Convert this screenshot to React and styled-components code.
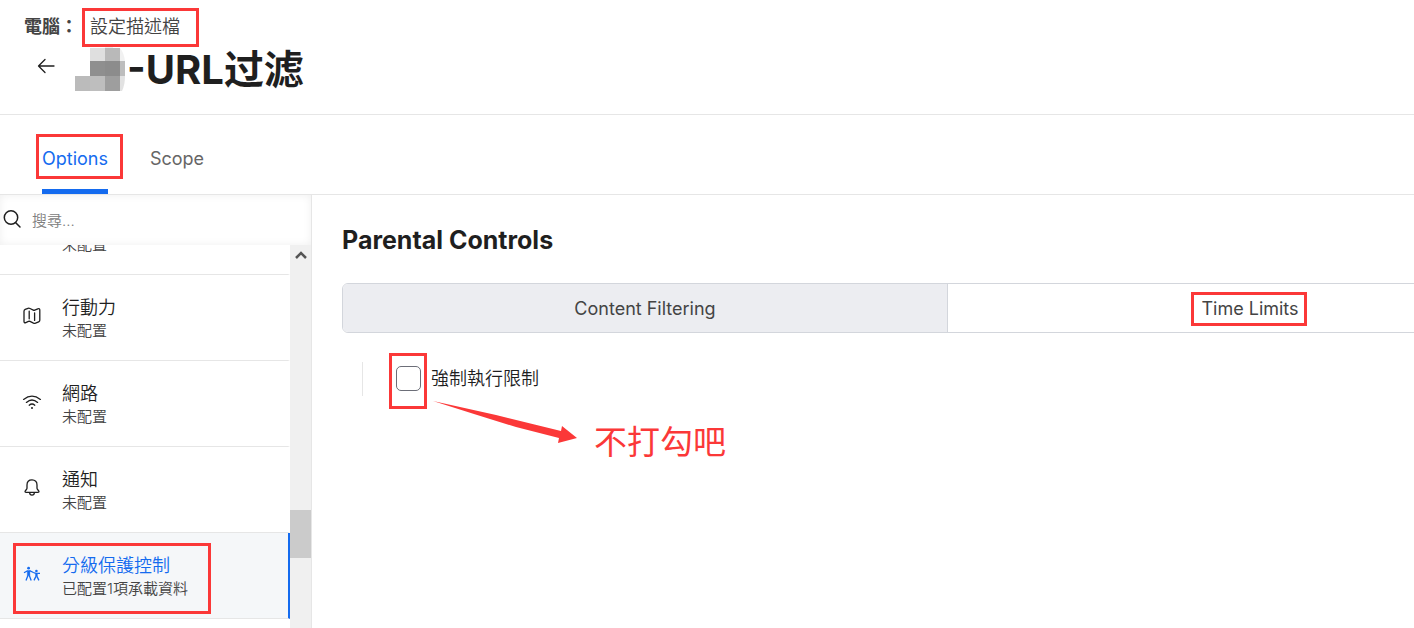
import React from "react";
import styled, { createGlobalStyle, ThemeProvider } from "styled-components";

const theme = {
  Text: "#1f1f1f",
  SubText: "#444444",
  Muted: "#666666",
  Blue: "#146bef",
  Line: "#e6e6e6",
  SegmentLine: "#d3d6dc",
  Mark: "#fb3838",
};

const GlobalStyle = createGlobalStyle`
  * {
    box-sizing: border-box;
  }
  body {
    margin: 0;
    background: #ffffff;
    color: ${(props) => props.theme.Text};
    font-family: Inter, "Noto Sans CJK TC", sans-serif;
    font-size: 18px;
    overflow: hidden;
  }
  h1, h2, p {
    margin: 0;
  }
  button, input {
    font: inherit;
    color: inherit;
  }
`;

const Page = styled.div`
  display: flex;
  flex-direction: column;
  height: 100vh;
`;

/* red frame drawn round its parent; $box is top right bottom left */
const Mark = styled.span`
  position: absolute;
  inset: ${(props) => props.$box};
  border: 3px solid ${(props) => props.theme.Mark};
  pointer-events: none;
  z-index: 2;
`;

const Header = styled.header`
  padding: 14px 24px 16px;
  border-bottom: 1px solid ${(props) => props.theme.Line};
`;
const Crumbs = styled.nav`
  display: flex;
  align-items: center;
  gap: 12px;
  line-height: 26px;
  color: ${(props) => props.theme.SubText};
`;
const CrumbLabel = styled.span`
  width: 54px;
  white-space: nowrap;
  font-weight: 700;
`;
const CrumbLink = styled.a`
  position: relative;
  color: inherit;
  font-weight: 350;
  text-decoration: none;
`;
const TitleRow = styled.div`
  display: flex;
  align-items: center;
  height: 58px;
  padding-top: 2px;
`;
const BackButton = styled.button`
  display: flex;
  padding: 0;
  margin: 0 19px 8px 12px;
  border: 0;
  background: none;
`;
const Title = styled.h1`
  font-family: Inter, "Noto Sans CJK SC", sans-serif;
  font-size: 40px;
  line-height: 56px;
  font-weight: 700;
`;

const Tabs = styled.nav`
  display: flex;
  gap: 42px;
  height: 80px;
  flex: none;
  padding: 0 42px;
  border-bottom: 1px solid ${(props) => props.theme.Line};
`;
const Tab = styled.a`
  position: relative;
  display: flex;
  align-items: center;
  padding-top: 13px;
  border-bottom: 5px solid
    ${(props) => (props.$active ? props.theme.Blue : "transparent")};
  color: ${(props) => (props.$active ? props.theme.Blue : props.theme.Muted)};
  text-decoration: none;
`;

const Content = styled.div`
  display: flex;
  flex: 1;
  min-height: 0;
`;
const Sidebar = styled.aside`
  display: flex;
  flex-direction: column;
  width: 312px;
  flex: none;
  border-right: 1px solid ${(props) => props.theme.Line};
`;
const Search = styled.label`
  display: flex;
  align-items: center;
  gap: 10px;
  height: 50px;
  flex: none;
  padding-left: 2px;
  box-shadow: inset 0 0 8px #efefef;
`;
const SearchInput = styled.input`
  flex: 1;
  min-width: 0;
  padding: 0;
  border: 0;
  outline: 0;
  background: none;
  font-size: 15px;
  font-weight: 350;
  &::placeholder {
    color: #808080;
  }
`;
const ListArea = styled.div`
  display: flex;
  flex: 1;
  min-height: 0;
`;
const ListClip = styled.div`
  flex: 1;
  overflow: hidden;
`;
const List = styled.div`
  margin-top: -56px;
`;
const Item = styled.a`
  position: relative;
  display: flex;
  align-items: center;
  gap: 20px;
  height: 86px;
  padding: 2px 22px 0;
  border-bottom: 1px solid ${(props) => props.theme.Line};
  border-right: 2px solid
    ${(props) => (props.$active ? props.theme.Blue : "transparent")};
  background: ${(props) => (props.$active ? "#f5f7f9" : "#ffffff")};
  color: ${(props) => (props.$active ? props.theme.Blue : props.theme.Text)};
  text-decoration: none;
`;
const ItemIcon = styled.svg`
  width: 20px;
  height: 20px;
  flex: none;
  margin-bottom: 6px;
`;
const ItemName = styled.p`
  min-height: 24px;
  line-height: 24px;
  font-weight: 350;
`;
const ItemState = styled.p`
  line-height: 22px;
  font-size: 15px;
  font-weight: 350;
  color: ${(props) => props.theme.SubText};
`;

const Scrollbar = styled.div`
  display: flex;
  flex-direction: column;
  width: 21px;
  background: #f0f0f0;
`;
const ScrollUp = styled.button`
  display: flex;
  align-items: center;
  justify-content: center;
  height: 20px;
  padding: 0;
  border: 0;
  background: none;
`;
const Track = styled.div`
  flex: ${(props) => props.$part};
`;
const Thumb = styled.div`
  height: 48px;
  background: #cbcbcb;
`;

const Main = styled.main`
  flex: 1;
  min-width: 0;
  overflow: hidden;
  padding: 28px 0 0 30px;
`;
const Heading = styled.h2`
  font-size: 25px;
  line-height: 34px;
  font-weight: 700;
`;
const Segments = styled.div`
  display: flex;
  width: calc(100% + 140px);
  height: 50px;
  margin-top: 26px;
  border: 1px solid ${(props) => props.theme.SegmentLine};
  border-radius: 6px;
  overflow: hidden;
`;
const Segment = styled.button`
  flex: 1;
  padding: 0;
  border: 0;
  border-right: 1px solid ${(props) => props.theme.SegmentLine};
  background: ${(props) => (props.$active ? "#ecedf1" : "#ffffff")};
  color: ${(props) => props.theme.SubText};
`;
const SegmentText = styled.span`
  position: relative;
`;
const Setting = styled.div`
  position: relative;
  display: flex;
  align-items: center;
  gap: 10px;
  height: 34px;
  margin: 29px 0 0 20px;
  padding-left: 33px;
  border-left: 1px solid ${(props) => props.theme.Line};
`;
const CheckWrap = styled.span`
  position: relative;
  display: flex;
  margin-bottom: 2px;
`;
const Checkbox = styled.input`
  appearance: none;
  width: 25px;
  height: 25px;
  margin: 0;
  border: 1px solid #6c6e78;
  border-radius: 5px;
  background: #ffffff;
`;
const SettingLabel = styled.label`
  margin-bottom: 4px;
  font-weight: 350;
`;
const Arrow = styled.svg`
  position: absolute;
  left: 69px;
  top: 37px;
`;
const Note = styled.p`
  position: absolute;
  left: 231px;
  top: 54px;
  font-family: "Noto Sans CJK SC", sans-serif;
  font-size: 33px;
  line-height: 48px;
  color: ${(props) => props.theme.Mark};
`;

const stroke = {
  fill: "none",
  stroke: "currentColor",
  strokeWidth: 1.3,
  strokeLinecap: "round",
  strokeLinejoin: "round",
};

const icons = {
  map: (
    <g {...stroke}>
      <path d="M2 5.2Q2 4 3.2 3.4L6 2.3Q7 2 8 2.5l3.3 1.6q.7.3 1.5 0l3-1.3q2-.6 2 1.2v10.2q0 1.1-1.1 1.6l-3.2 1.4q-1 .4-2 0L8 15.4q-.8-.3-1.6 0L3.8 16.6Q2 17.2 2 15.6Z" />
      <path d="M7.2 5.2v7.6M12.6 6.8v7.6" />
    </g>
  ),
  wifi: (
    <g {...stroke}>
      <path d="M1.6 7.400Q10 .8 18.400 7.400M4.400 10.400q5.600-4.800 11.200 0M7.200 13.200q2.800-2.400 5.600 0" />
      <circle cx="10" cy="15.900" r="1" fill="currentColor" stroke="none" />
    </g>
  ),
  bell: (
    <g {...stroke}>
      <path d="M10 1.8C6.8 1.8 5 4 5 7v3.2c0 1.200-2 2.400-2 3.600 0 .5.5.5 1 .5h12c.5 0 1 0 1-.5 0-1.200-2-2.400-2-3.600V7c0-3-1.800-5.200-5-5.200ZM7.600 14.500c.200 3.600 4.600 3.600 4.800 0" />
    </g>
  ),
  family: (
    <g {...stroke} strokeLinecap="butt">
      <circle cx="6.600" cy="4.200" r="1.400" fill="currentColor" stroke="none" />
      <circle cx="14.400" cy="7" r="1.300" fill="currentColor" stroke="none" />
      <path d="M5.300 6.600h2.600v5.200H5.300zM13.500 9h1.900v3.700h-1.900z" fill="currentColor" strokeWidth=".4" />
      <path d="M2 8.700 5.600 6.700M7.600 6.700l3.800 1.800 2.400.9M15.200 9.400h2.800M5.900 11.600 4 16.400M7.300 11.600l1.900 4.800M13.800 12.600 12 16.400M15.100 12.600l1.800 3.800" />
    </g>
  ),
};

const items = [
  { id: "previous", name: "", state: "未配置" },
  { id: "mobility", icon: "map", name: "行動力", state: "未配置" },
  { id: "network", icon: "wifi", name: "網路", state: "未配置" },
  { id: "notifications", icon: "bell", name: "通知", state: "未配置" },
  {
    id: "parental",
    icon: "family",
    name: "分級保護控制",
    state: "已配置1項承載資料",
    active: true,
  },
];

function Mosaic() {
  return (
    <svg width="52" height="52" viewBox="0 0 52 52" aria-hidden="true">
      <path d="M30 1h8v3h-8z" fill="#eeeeee" />
      <path d="M15 4h15v13H15z" fill="#dfdfdf" />
      <path d="M30 4h15v13H30z" fill="#b9b9b9" />
      <path d="M45 4q4 5 5 13h-5z" fill="#f1f1f1" />
      <path d="M15 17h15v15H15z" fill="#8f8f8f" />
      <path d="M30 17h15v15H30z" fill="#8c8c8c" />
      <path d="M45 17h5v15h-5z" fill="#bdbdbd" />
      <path d="M0 32h15v15H0z" fill="#bbbbbb" />
      <path d="M15 32h15v15H15z" fill="#bebebe" />
      <path d="M30 32h15v15H30z" fill="#9e9e9e" />
      <path d="M45 32h5q0 9-3 15h-2z" fill="#e2e2e2" />
    </svg>
  );
}

function PageHeader() {
  return (
    <Header>
      <Crumbs>
        <CrumbLabel>電腦：</CrumbLabel>
        <CrumbLink href="#profiles">
          設定描述檔
          <Mark $box="-6px -19px -7px -8px" />
        </CrumbLink>
      </Crumbs>
      <TitleRow>
        <BackButton aria-label="Back">
          <svg width="20" height="20" viewBox="0 0 20 20">
            <path {...stroke} d="M18 10H2.500M9 3.500 2.500 10 9 16.500" />
          </svg>
        </BackButton>
        <Mosaic />
        <Title>-URL过滤</Title>
      </TitleRow>
    </Header>
  );
}

function SettingsList() {
  return (
    <Sidebar>
      <Search>
        <svg width="20" height="24" viewBox="0 0 20 24">
          <path {...stroke} strokeWidth="1.500" d="M13.500 14.500 18 19" />
          <circle {...stroke} strokeWidth="1.500" cx="9" cy="9.500" r="6.700" />
        </svg>
        <SearchInput type="text" placeholder="搜尋..." />
      </Search>
      <ListArea>
        <ListClip>
          <List>
            {items.map((item) => (
              <Item key={item.id} href={`#${item.id}`} $active={item.active}>
                <ItemIcon viewBox="0 0 20 20">{icons[item.icon]}</ItemIcon>
                <div>
                  <ItemName>{item.name}</ItemName>
                  <ItemState>{item.state}</ItemState>
                </div>
                {item.active && <Mark $box="10px 77px 4px 13px" />}
              </Item>
            ))}
          </List>
        </ListClip>
        <Scrollbar>
          <ScrollUp aria-label="Scroll up">
            <svg width="12" height="10" viewBox="0 0 12 10">
              <path d="M1 8 6 3l5 5" fill="none" stroke="#555555" strokeWidth="2.500" />
            </svg>
          </ScrollUp>
          <Track $part={7} />
          <Thumb />
          <Track $part={2} />
        </Scrollbar>
      </ListArea>
    </Sidebar>
  );
}

function App() {
  return (
    <ThemeProvider theme={theme}>
      <GlobalStyle />
      <Page>
        <PageHeader />
        <Tabs>
          <Tab href="#options" $active>
            Options
            <Mark $box="19px -15px 10px -6px" />
          </Tab>
          <Tab href="#scope">Scope</Tab>
        </Tabs>
        <Content>
          <SettingsList />
          <Main>
            <Heading>Parental Controls</Heading>
            <Segments>
              <Segment $active>Content Filtering</Segment>
              <Segment>
                <SegmentText>
                  Time Limits
                  <Mark $box="-6px -8px -7px -10px" />
                </SegmentText>
              </Segment>
            </Segments>
            <Setting>
              <CheckWrap>
                <Checkbox type="checkbox" id="enforce" />
                <Mark $box="-13px -6px -18px -7px" />
              </CheckWrap>
              <SettingLabel htmlFor="enforce">強制執行限制</SettingLabel>
              <Arrow width="146" height="46" viewBox="0 0 146 46">
                <path
                  d="M1 2 64 16l65 16 1-5 15 12-19 5 1-5-43-11L42 15Z"
                  fill={theme.Mark}
                />
              </Arrow>
              <Note>不打勾吧</Note>
            </Setting>
          </Main>
        </Content>
      </Page>
    </ThemeProvider>
  );
}

export default App;
